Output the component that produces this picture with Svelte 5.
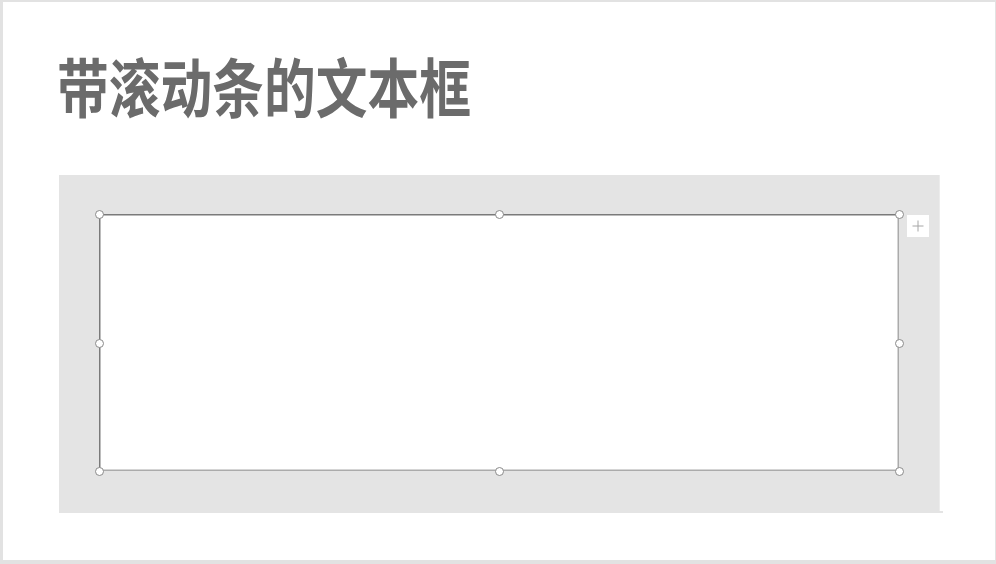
<script>
  const handles = ['tl','tc','tr','ml','mr','bl','bc','br'];
</script>

<div class="frame">
  <div class="slide">
    <h1 class="title">带滚动条的文本框</h1>
    <div class="panel">
      <div class="textbox">
        {#each handles as h}
          <span class="handle {h}"></span>
        {/each}
        <span class="plus">
          <svg width="12" height="12" viewBox="0 0 12 12"><path d="M6 0.5V11.5M0.5 6H11.5" stroke="#a6a6a6" stroke-width="1" fill="none"/></svg>
        </span>
      </div>
      <span class="corner"></span>
    </div>
  </div>
</div>

<style>
  :global(body) { margin: 0; background: #fff; }
  .frame {
    width: 996px;
    height: 564px;
    box-sizing: border-box;
    padding: 2px 1px 4px 3px;
    background: #e2e2e2;
  }
  .slide {
    height: 100%;
    background: #fff;
    box-sizing: border-box;
    padding: 36px 0 0 54px;
  }
  .title {
    margin: 0;
    height: 137px;
    font-family: "Noto Sans CJK SC", sans-serif;
    font-weight: 700;
    font-size: 51.75px;
    line-height: 75px;
    color: #6b6b6b;
    white-space: nowrap;
    transform: scaleY(1.24);
    transform-origin: left top;
  }
  .panel {
    position: relative;
    margin-left: 2px;
    width: 881px;
    height: 338px;
    box-sizing: border-box;
    padding: 39px 41px 42px 40px;
    background: #e4e4e4;
    border-right: 1px solid #ececec;
  }
  .textbox {
    position: relative;
    width: 800px;
    height: 257px;
    background: #fff;
    box-shadow:
      inset 0 1.5px 0 #7a7a7a,
      inset 1.5px 0 0 #7a7a7a,
      inset -1.5px 0 0 #ababab,
      inset 0 -1.5px 0 #ababab;
  }
  .handle {
    position: absolute;
    width: 9px;
    height: 9px;
    box-sizing: border-box;
    border: 1.5px solid #8a8a8a;
    border-radius: 50%;
    background: #fff;
    transform: translate(-4px, -4px);
  }
  .tl { left: 0; top: 0; }
  .tc { left: 50%; top: 0; }
  .tr { left: 100%; top: 0; }
  .ml { left: 0; top: 50%; }
  .mr { left: 100%; top: 50%; }
  .bl { left: 0; top: 100%; }
  .bc { left: 50%; top: 100%; }
  .br { left: 100%; top: 100%; }
  .plus {
    position: absolute;
    left: 808px;
    top: 1px;
    width: 22px;
    height: 22px;
    background: #fff;
    display: flex;
    align-items: center;
    justify-content: center;
  }
  .corner {
    position: absolute;
    right: -4px;
    bottom: 0;
    width: 4px;
    height: 2px;
    background: #e4e4e4;
  }
</style>
